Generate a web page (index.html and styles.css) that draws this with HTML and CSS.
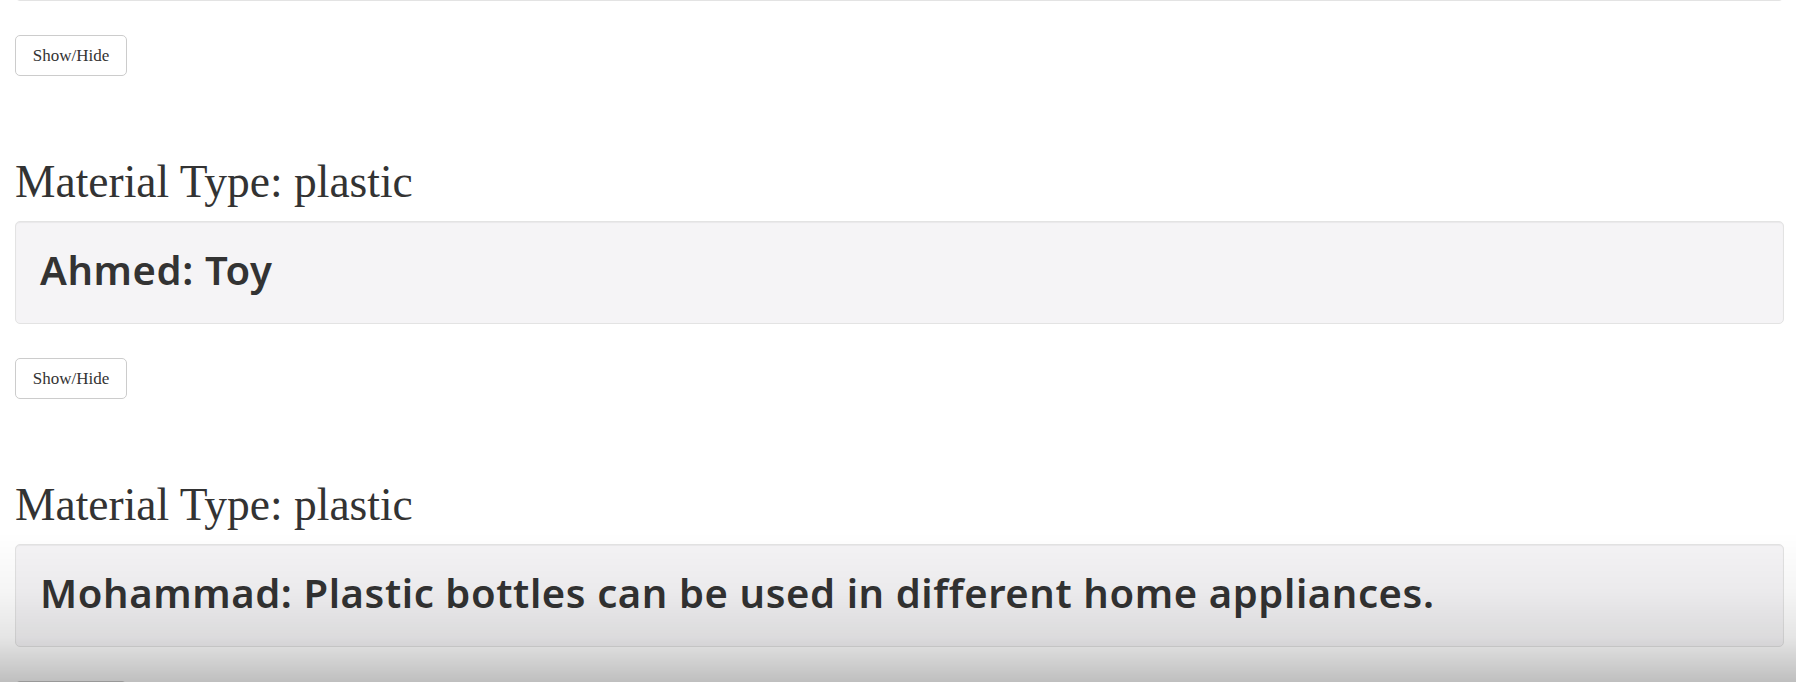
FILE: index.html
```html
<!DOCTYPE html>
<html>
<head>
<meta charset="utf-8">
<link rel="stylesheet" href="styles.css">
</head>
<body>
<div class="page">
  <div class="well well-prev"><p class="post"></p></div>

  <button class="btn">Show/Hide</button>
  <h1 class="mat">Material Type: plastic</h1>
  <div class="well"><p class="post">Ahmed: Toy</p></div>

  <button class="btn">Show/Hide</button>
  <h1 class="mat">Material Type: plastic</h1>
  <div class="well"><p class="post">Mohammad: Plastic bottles can be used in different home appliances.</p></div>

  <button class="btn">Show/Hide</button>
</div>
<div class="shade"></div>
</body>
</html>
```
FILE: styles.css
```css
html, body {
  margin: 0;
  padding: 0;
  background: #fff;
  overflow: hidden;
  height: 682px;
}
.page {
  display: flex;
  flex-direction: column;
  align-items: flex-start;
  padding: 0 12px 0 15px;
  font-family: "Liberation Serif", "Times New Roman", serif;
  color: #333;
}
.well {
  box-sizing: border-box;
  align-self: stretch;
  height: 103px;
  background: #f5f4f6;
  border: 1px solid #e3e3e3;
  border-radius: 5px;
  box-shadow: inset 0 1px 1px rgba(0,0,0,0.05);
  padding: 0 24px 5px 24px;
  display: flex;
  align-items: center;
}
.well-prev {
  margin-top: -102px;
}
.post {
  margin: 0;
  font-family: "Noto Sans", "DejaVu Sans", sans-serif;
  font-weight: 600;
  font-size: 40px;
  letter-spacing: 0.6px;
  line-height: 44px;
  color: #333;
}
.btn {
  margin-top: 34px;
  box-sizing: border-box;
  height: 41px;
  width: 112px;
  padding: 0;
  background: #fff;
  border: 1px solid #ccc;
  border-radius: 5px;
  font-family: "Liberation Serif", "Times New Roman", serif;
  font-size: 17px;
  color: #333;
}
.mat {
  margin: 82px 0 15px 0;
  font-weight: normal;
  font-size: 45.5px;
  line-height: 48px;
  color: #333;
}
.shade {
  position: fixed;
  left: 0;
  right: 0;
  bottom: 0;
  height: 150px;
  pointer-events: none;
  background: linear-gradient(to bottom, rgba(0,0,0,0) 0%, rgba(0,0,0,0.04) 40%, rgba(0,0,0,0.1) 70%, rgba(0,0,0,0.25) 100%);
}
```
